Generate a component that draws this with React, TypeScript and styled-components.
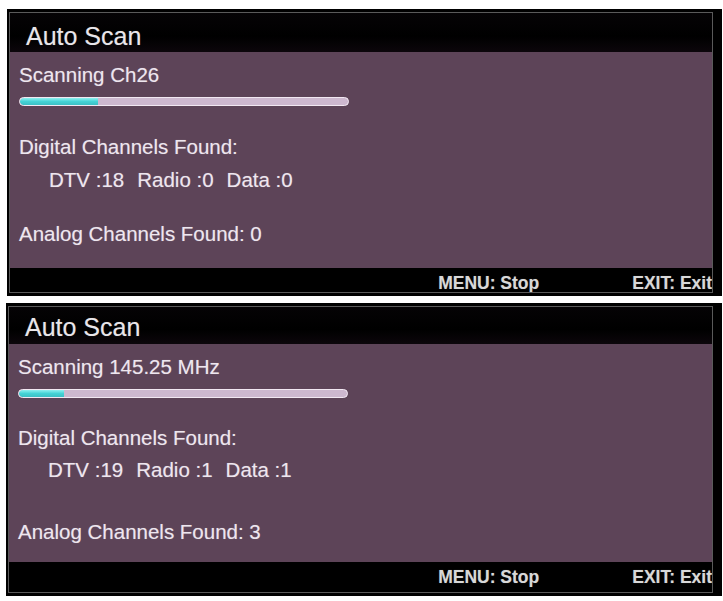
import React from "react";
import styled, { createGlobalStyle } from "styled-components";

const Global = createGlobalStyle`
  html, body { margin: 0; padding: 0; background: #ffffff; }
  body { font-family: "Liberation Sans", Arial, sans-serif; }
`;

const Page = styled.div`
  width: 723px;
  height: 601px;
  box-sizing: border-box;
  padding: 9px 1px 0 7px;
  display: flex;
  flex-direction: column;
  gap: 7px;
  background: #fff;
`;

const Panel = styled.section<{ $shift: number }>`
  background: #000;
  padding: 3px 9px 3px 2px;
  margin-left: ${(p) => p.$shift}px;
  display: flex;
`;

const Frame = styled.div`
  flex: 1;
  border: 1px solid #5a5a5a;
  display: flex;
  flex-direction: column;
`;

const Header = styled.div<{ $h: number; $pt: number }>`
  height: ${(p) => p.$h}px;
  box-sizing: border-box;
  padding: ${(p) => p.$pt}px 0 0 16px;
  background: linear-gradient(#050305, #000 60%, #0c060b);
  color: #e9e6ea;
  font-size: 25px;
  line-height: 25px;
  text-shadow: 0 0 1px rgba(255, 255, 255, 0.3);
`;

const Body = styled.div<{ $h: number }>`
  height: ${(p) => p.$h}px;
  box-sizing: border-box;
  background: #5d4458;
  padding-left: 9px;
  display: flex;
  flex-direction: column;
  color: #eee6ef;
  font-size: 20.5px;
  line-height: 20px;
`;

const Line = styled.div<{ $top: number; $indent?: number }>`
  margin-top: ${(p) => p.$top}px;
  padding-left: ${(p) => p.$indent ?? 0}px;
  white-space: nowrap;
  display: flex;
  gap: 13px;
  text-shadow: 0 0 1px rgba(255, 255, 255, 0.35);
`;

const Track = styled.div<{ $top: number }>`
  margin-top: ${(p) => p.$top}px;
  width: 330px;
  height: 9px;
  box-sizing: border-box;
  border-radius: 5px;
  border: 1px solid #f2e8f2;
  background: #cdb8cf;
  overflow: hidden;
  display: flex;
`;

const Fill = styled.div`
  height: 100%;
  border-radius: 4px 0 0 4px;
  background: linear-gradient(#8ff0f0, #45d3d6 50%, #3cbfc4);
`;

const Footer = styled.div<{ $h: number; $pt: number }>`
  height: ${(p) => p.$h}px;
  box-sizing: border-box;
  padding-top: ${(p) => p.$pt}px;
  background: #000;
  display: flex;
  justify-content: flex-end;
  gap: 93px;
  color: #d8d8d8;
  font-size: 17.5px;
  font-weight: bold;
  line-height: 18px;
  overflow: hidden;
  white-space: nowrap;
  text-shadow: 0 0 1px rgba(255, 255, 255, 0.3);
`;

const Hint = styled.span`
  display: block;
`;

type ScanData = {
  scanning: string;
  progress: number;
  dtv: number;
  radio: number;
  data: number;
  analog: number;
  shift: number;
  headerH: number;
  headerPt: number;
  bodyH: number;
  footerH: number;
  footerPt: number;
  gaps: [number, number, number, number, number];
};

const scans: ScanData[] = [
  {
    scanning: "Scanning Ch26",
    progress: 78,
    dtv: 18,
    radio: 0,
    data: 0,
    analog: 0,
    shift: 0,
    headerH: 39,
    headerPt: 11,
    bodyH: 216,
    footerH: 24,
    footerPt: 6,
    gaps: [13, 12, 31, 13, 34],
  },
  {
    scanning: "Scanning 145.25 MHz",
    progress: 45,
    dtv: 19,
    radio: 1,
    data: 1,
    analog: 3,
    shift: -1,
    headerH: 37,
    headerPt: 8,
    bodyH: 218,
    footerH: 30,
    footerPt: 6,
    gaps: [13, 12, 30, 12, 42],
  },
];

function ScanPanel({ d }: { d: ScanData }) {
  return (
    <Panel $shift={d.shift}>
      <Frame>
        <Header $h={d.headerH} $pt={d.headerPt}>Auto Scan</Header>
        <Body $h={d.bodyH}>
          <Line $top={d.gaps[0]}>{d.scanning}</Line>
          <Track $top={d.gaps[1]}>
            <Fill style={{ width: `${d.progress}px` }} />
          </Track>
          <Line $top={d.gaps[2]}>Digital Channels Found:</Line>
          <Line $top={d.gaps[3]} $indent={30}>
            <span>DTV :{d.dtv}</span>
            <span>Radio :{d.radio}</span>
            <span>Data :{d.data}</span>
          </Line>
          <Line $top={d.gaps[4]}>Analog Channels Found: {d.analog}</Line>
        </Body>
        <Footer $h={d.footerH} $pt={d.footerPt}>
          <Hint>MENU: Stop</Hint>
          <Hint>EXIT: Exit</Hint>
        </Footer>
      </Frame>
    </Panel>
  );
}

export default function App() {
  return (
    <>
      <Global />
      <Page>
        {scans.map((d, i) => (
          <ScanPanel key={i} d={d} />
        ))}
      </Page>
    </>
  );
}
